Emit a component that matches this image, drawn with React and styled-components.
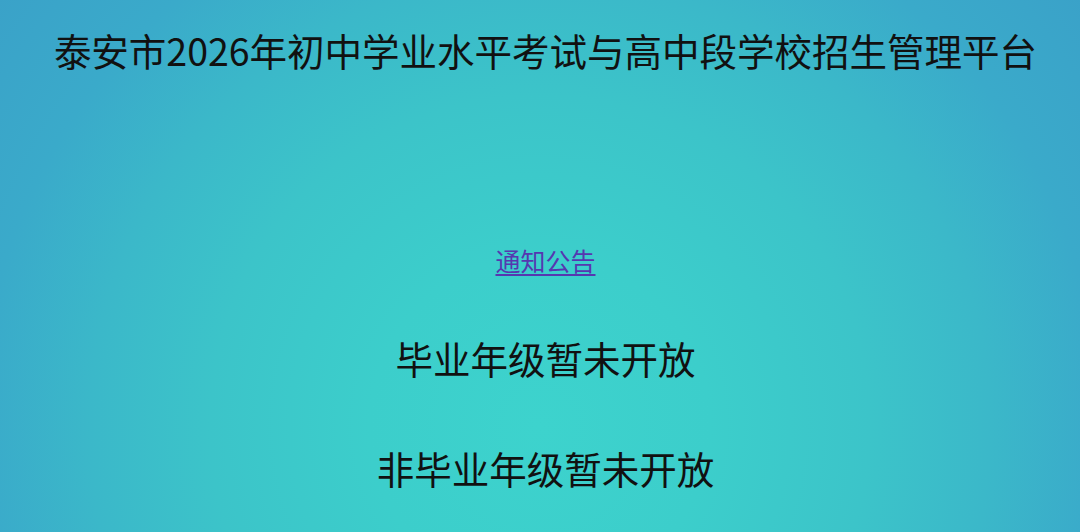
import React from "react";
import styled, { createGlobalStyle } from "styled-components";

const GlobalStyle = createGlobalStyle`
  html, body {
    margin: 0;
    padding: 0;
    height: 100%;
  }
  body {
    font-family: "Noto Sans CJK SC", "Noto Sans", sans-serif;
  }
`;

const Page = styled.div`
  min-height: 100vh;
  display: flex;
  flex-direction: column;
  align-items: center;
  padding: 24px 0 0 11px;
  box-sizing: border-box;
  background: radial-gradient(
    circle at 50% 80%,
    #3dd3cd 0px,
    #3ccecb 170px,
    #3cc4c9 330px,
    #3bb8c9 450px,
    #3aaaca 560px,
    #3aa0c8 720px
  );
  color: #111;
`;

const Title = styled.h1`
  margin: 0;
  font-size: 37.5px;
  font-weight: 400;
  line-height: 52px;
  white-space: nowrap;
`;

const Notice = styled.a`
  margin-top: 167px;
  font-size: 25px;
  line-height: 34px;
  color: #5637b0;
  text-decoration: underline;
  text-underline-offset: 3px;
  cursor: pointer;
`;

const Status = styled.h2`
  margin: ${(p) => p.$gap}px 0 0;
  font-size: 37.5px;
  font-weight: 400;
  line-height: 52px;
  white-space: nowrap;
`;

const App = () => {
  return (
    <>
      <GlobalStyle />
      <Page>
        <Title>泰安市2026年初中学业水平考试与高中段学校招生管理平台</Title>
        <Notice href="#">通知公告</Notice>
        <Status $gap={55}>毕业年级暂未开放</Status>
        <Status $gap={58}>非毕业年级暂未开放</Status>
      </Page>
    </>
  );
};

export default App;
